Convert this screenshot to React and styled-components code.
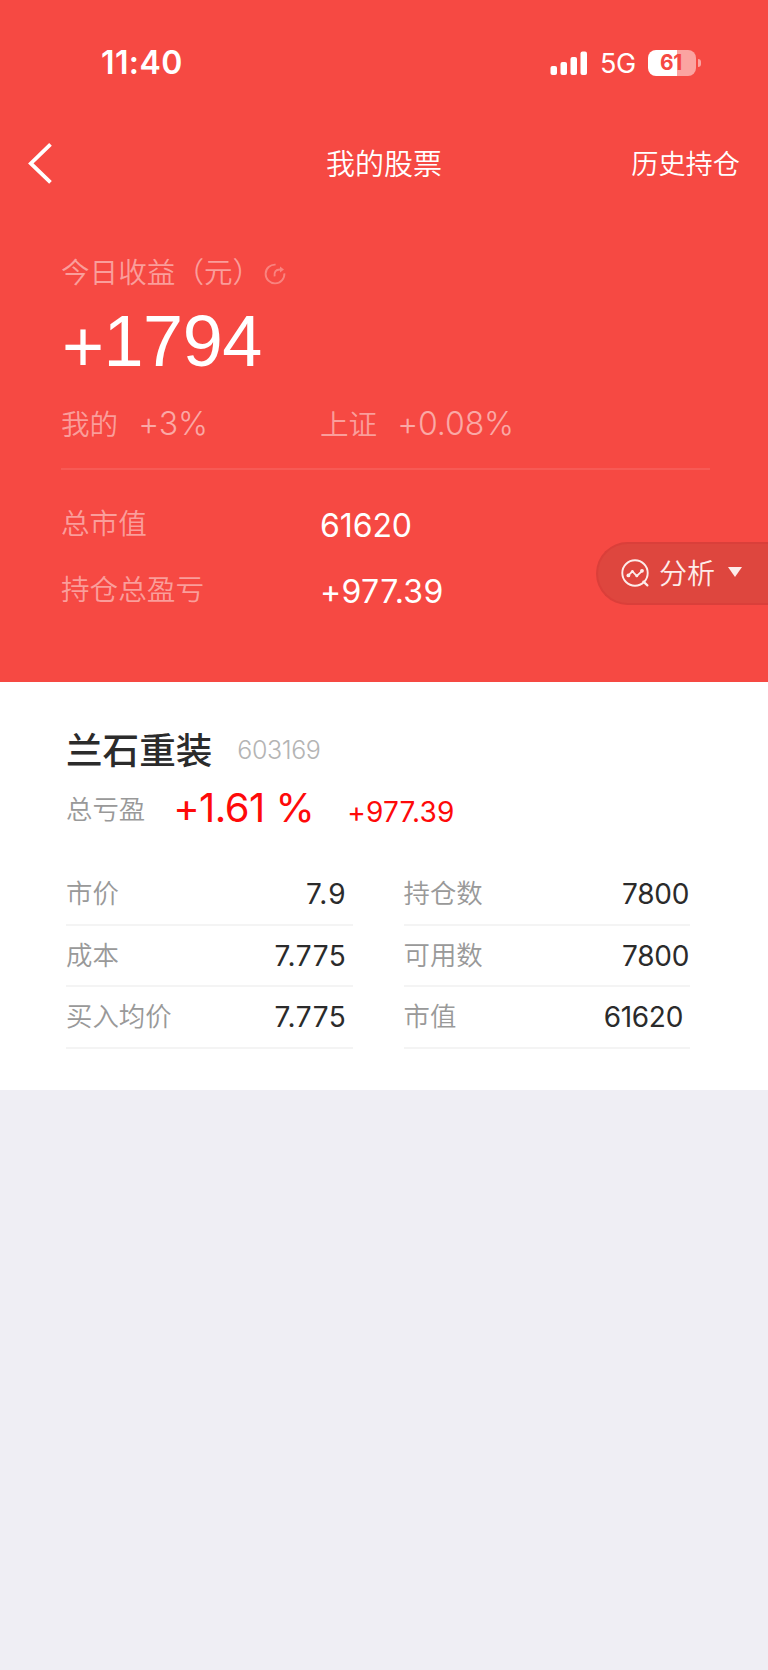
import React from 'react'
import styled, { createGlobalStyle } from 'styled-components'

const CJK = "'Noto Sans CJK SC', sans-serif"
const LATIN = "Inter, 'Noto Sans CJK SC', sans-serif"

const HOLDING = {
  name: '兰石重装',
  code: '603169',
  percent: '+1.61 %',
  profit: '+977.39',
  columns: [
    [
      { label: '市价', value: '7.9', spacing: '1px' },
      { label: '成本', value: '7.775', spacing: '0.6px' },
      { label: '买入均价', value: '7.775', spacing: '0.6px' },
    ],
    [
      { label: '持仓数', value: '7800', inset: 1 },
      { label: '可用数', value: '7800', inset: 1 },
      { label: '市值', value: '61620', inset: 7 },
    ],
  ],
}

function StatusIcons() {
  return (
    <StatusRight>
      <svg width="38" height="24" viewBox="0 0 38 24" fill="#fff">
        <rect x="0.5" y="15" width="6.5" height="9" rx="2" />
        <rect x="10.5" y="11" width="6.5" height="13" rx="2" />
        <rect x="20.5" y="6" width="6.5" height="18" rx="2" />
        <rect x="30.5" y="0.5" width="6.5" height="23.5" rx="2" />
      </svg>
      <Network>5G</Network>
      <Battery>
        <BatteryBody>61</BatteryBody>
        <BatteryTip />
      </Battery>
    </StatusRight>
  )
}

function BackIcon() {
  return (
    <svg width="24" height="42" viewBox="0 0 24 42" fill="none" stroke="#fff" strokeWidth="3.8">
      <path d="M22.5 2.4 L2.8 21.4 L22.5 40.4" />
    </svg>
  )
}

function ShareIcon() {
  return (
    <svg width="22" height="22" viewBox="0 0 22 22" fill="none" stroke="#fff" strokeOpacity="0.32" strokeWidth="1.9">
      <path d="M11.6 1.6 A9.4 9.4 0 1 0 20.4 10.4" />
      <path d="M10.6 13.4 C10 8.6 11.6 6.7 16 6.5" />
      <path d="M16 3.6 L20 6.5 L16 9.4 Z" fill="#fff" fillOpacity="0.32" stroke="none" />
    </svg>
  )
}

function AnalysisIcon() {
  return (
    <svg width="28" height="28" viewBox="0 0 28 28" fill="none" stroke="#fdecea" strokeWidth="1.9">
      <circle cx="14" cy="14" r="12.7" />
      <path d="M22.4 22.6 L26.4 26.4" strokeWidth="2.2" strokeLinecap="round" />
      <path d="M7.4 16.4 L11.4 12.4 L15.8 17 L21.2 11.8" strokeWidth="1.8" />
      <g fill="#fdecea" stroke="none">
        <circle cx="7.4" cy="16.4" r="1.9" />
        <circle cx="11.4" cy="12.4" r="1.5" />
        <circle cx="15.8" cy="16.8" r="1.5" />
        <circle cx="21" cy="11.8" r="1.9" />
      </g>
    </svg>
  )
}

function App() {
  return (
    <Page>
      <GlobalStyle />
      <Hero>
        <StatusBar>
          <Time>11:40</Time>
          <StatusIcons />
        </StatusBar>
        <NavBar>
          <NavSlot>
            <BackIcon />
          </NavSlot>
          <NavTitle>我的股票</NavTitle>
          <NavSlot $end>
            <NavLink>历史持仓</NavLink>
          </NavSlot>
        </NavBar>
        <Summary>
          <TodayLabel>
            <Muted>今日收益（元）</Muted>
            <ShareIcon />
          </TodayLabel>
          <TodayProfit>
            <Sign>+</Sign>1794
          </TodayProfit>
          <CompareRow>
            <CompareCell>
              <Muted>我的</Muted>
              <Rate>+3%</Rate>
            </CompareCell>
            <CompareCell>
              <Muted>上证</Muted>
              <Rate>+0.08%</Rate>
            </CompareCell>
          </CompareRow>
          <Totals>
            <TotalRow>
              <Muted>总市值</Muted>
              <TotalValue $spacing="-0.1px">61620</TotalValue>
            </TotalRow>
            <TotalRow>
              <Muted>持仓总盈亏</Muted>
              <TotalValue $spacing="0.35px">+977.39</TotalValue>
            </TotalRow>
          </Totals>
        </Summary>
        <AnalysisButton>
          <AnalysisIcon />
          <span>分析</span>
          <Caret />
        </AnalysisButton>
      </Hero>
      <Card>
        <CardHead>
          <StockName>{HOLDING.name}</StockName>
          <StockCode>{HOLDING.code}</StockCode>
        </CardHead>
        <ProfitRow>
          <ProfitLabel>总亏盈</ProfitLabel>
          <ProfitPercent>{HOLDING.percent}</ProfitPercent>
          <ProfitValue>{HOLDING.profit}</ProfitValue>
        </ProfitRow>
        <Fields>
          {HOLDING.columns.map((fields, i) => (
            <FieldColumn key={i}>
              {fields.map(field => (
                <Field key={field.label}>
                  <FieldLabel>{field.label}</FieldLabel>
                  <FieldValue $inset={field.inset} $spacing={field.spacing}>
                    {field.value}
                  </FieldValue>
                </Field>
              ))}
            </FieldColumn>
          ))}
        </Fields>
      </Card>
    </Page>
  )
}

const GlobalStyle = createGlobalStyle`
  body {
    margin: 0;
    background: #efeef4;
  }
  * {
    box-sizing: border-box;
  }
  svg {
    display: block;
    flex: none;
  }
`

const Page = styled.div`
  width: 768px;
  min-height: 1670px;
  background: #efeef4;
  font-family: ${CJK};
  white-space: nowrap;
`

const Hero = styled.header`
  position: relative;
  height: 682px;
  background: #f64943;
  color: #fff;
`

const StatusBar = styled.div`
  display: flex;
  justify-content: space-between;
  align-items: center;
  height: 125px;
  padding: 0 67px 0 101px;
`

const Time = styled.div`
  padding-top: 1px;
  font: 600 32px/40px ${LATIN};
  letter-spacing: 0.4px;
`

const StatusRight = styled.div`
  display: flex;
  align-items: center;
`

const Network = styled.span`
  margin-left: 12px;
  padding-top: 2px;
  width: 48px;
  font: 400 27px/36px ${LATIN};
  letter-spacing: -0.5px;
`

const Battery = styled.div`
  display: flex;
  align-items: center;
  gap: 2px;
`

const BatteryBody = styled.div`
  width: 48px;
  height: 26px;
  border-radius: 8px;
  background: linear-gradient(90deg, #fff 61%, #fba4a1 61%);
  color: #f64943;
  font: 700 21px/26px ${LATIN};
  letter-spacing: -0.3px;
  text-indent: -2px;
  text-align: center;
`

const BatteryTip = styled.div`
  width: 3px;
  height: 8px;
  border-radius: 0 4px 4px 0;
  background: #fba4a1;
`

const NavBar = styled.nav`
  display: grid;
  grid-template-columns: 1fr auto 1fr;
  align-items: center;
  height: 76px;
  padding: 0 28px;
`

const NavSlot = styled.div`
  display: flex;
  justify-content: ${props => (props.$end ? 'flex-end' : 'flex-start')};
`

const NavTitle = styled.h1`
  margin: 0;
  padding-bottom: 3px;
  font-size: 29px;
  font-weight: 350;
  line-height: 40px;
`

const NavLink = styled.span`
  padding-bottom: 3px;
  font-size: 27.2px;
  font-weight: 350;
  line-height: 40px;
`

const Summary = styled.section`
  padding: 50px 58px 0 61px;
`

const Muted = styled.span`
  color: rgba(255, 255, 255, 0.47);
  font-size: 28.6px;
  font-weight: 350;
  line-height: 40px;
`

const TodayLabel = styled.div`
  display: flex;
  align-items: center;
  gap: 3px;
  height: 40px;

  svg {
    margin-top: 5px;
  }
`

const TodayProfit = styled.div`
  height: 100px;
  padding-left: 1px;
  font: 400 72px/100px 'Liberation Sans', Arial, sans-serif;
  letter-spacing: -0.5px;
`

const Sign = styled.span`
  display: inline-block;
  line-height: 1;
  vertical-align: -5px;
`

const CompareRow = styled.div`
  display: grid;
  grid-template-columns: 259px 1fr;
  height: 79px;
  padding-bottom: 13px;
  border-bottom: 2px solid #f75a55;
`

const CompareCell = styled.div`
  display: flex;
  align-items: center;
  gap: 20px;
`

const Rate = styled.span`
  padding-top: 1px;
  color: rgba(255, 255, 255, 0.53);
  font: 300 32px/40px ${LATIN};
  letter-spacing: -0.1px;
`

const Totals = styled.div`
  padding-top: 20px;
`

const TotalRow = styled.div`
  display: grid;
  grid-template-columns: 259px 1fr;
  align-items: center;
  height: 66px;
  padding-bottom: 3px;
`

const TotalValue = styled.span`
  padding-top: 8px;
  font: 400 32px/40px ${LATIN};
  letter-spacing: ${props => props.$spacing};
`

// floats over the summary, flush with the right edge
const AnalysisButton = styled.button`
  position: absolute;
  top: 542px;
  right: 0;
  display: flex;
  align-items: center;
  width: 172px;
  height: 63px;
  padding: 0 0 2px 23px;
  border: 2px solid #da3f3a;
  border-right: 0;
  border-radius: 32px 0 0 32px;
  background: #de463e;
  color: #fdecea;
  font: 350 28px/40px ${CJK};

  span {
    margin: 0 13px 0 10px;
    padding-bottom: 1px;
  }
`

const Caret = styled.i`
  margin-bottom: 2px;
  border: 7px solid transparent;
  border-top: 10px solid #fdecea;
  border-bottom: 0;
`

const Card = styled.section`
  height: 408px;
  padding: 41px 78px 0 66px;
  background: #fff;
`

const CardHead = styled.div`
  display: flex;
  align-items: center;
  gap: 25px;
  height: 52px;
`

const StockName = styled.h2`
  margin: 0;
  color: #2b2b2b;
  font-size: 36.6px;
  font-weight: 500;
  line-height: 50px;
`

const StockCode = styled.span`
  padding-top: 2px;
  color: #b4b4b4;
  font: 300 25px/40px ${LATIN};
  letter-spacing: -0.4px;
`

const ProfitRow = styled.div`
  display: flex;
  align-items: center;
  height: 64px;
  color: #fe0a0a;
`

const ProfitLabel = styled.span`
  padding-top: 1px;
  color: #999;
  font-size: 26.4px;
  font-weight: 350;
  line-height: 40px;
`

const ProfitPercent = styled.span`
  margin-left: 28px;
  padding-top: 1px;
  font: 400 40px/60px ${LATIN};
  letter-spacing: -0.55px;
`

const ProfitValue = styled.span`
  margin-left: 33px;
  padding-top: 9px;
  font: 400 28px/40px ${LATIN};
  letter-spacing: 0.2px;
`

const Fields = styled.div`
  display: grid;
  grid-template-columns: 286.5px 286.5px;
  justify-content: space-between;
  margin-top: 25px;
`

const FieldColumn = styled.dl`
  margin: 0;
`

const Field = styled.div`
  display: flex;
  justify-content: space-between;
  align-items: center;
  height: 61.7px;
  border-bottom: 2px solid #f4f4f4;
`

const FieldLabel = styled.dt`
  padding-bottom: 4px;
  color: #999;
  font-size: 26.4px;
  font-weight: 350;
  line-height: 40px;
`

const FieldValue = styled.dd`
  margin: 0;
  padding: 0 ${props => props.$inset || 6}px 0 0;
  color: #2b2b2b;
  font: 400 28px/40px ${LATIN};
  letter-spacing: ${props => props.$spacing || '-0.3px'};
`

export default App
